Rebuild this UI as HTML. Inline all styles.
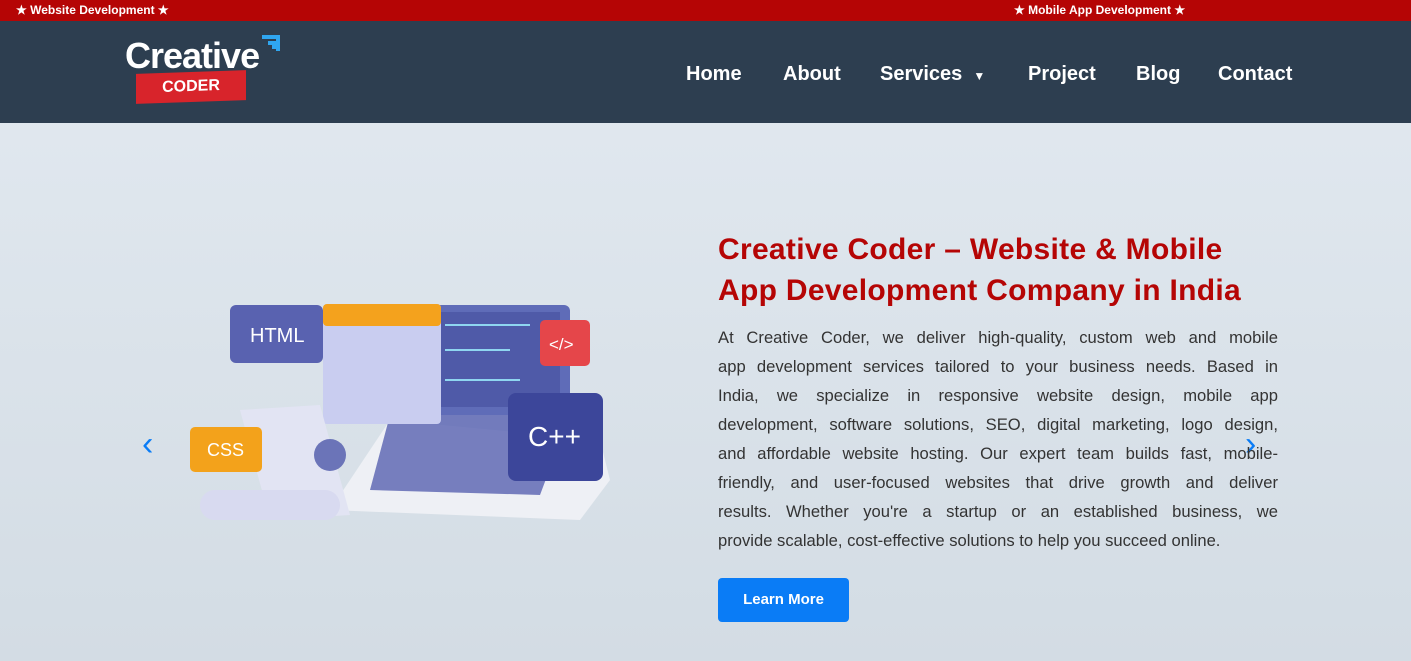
<!DOCTYPE html>
<html><head><meta charset="utf-8"><style>
*{margin:0;padding:0;box-sizing:border-box}
body{width:1411px;height:661px;overflow:hidden;font-family:"Liberation Sans",sans-serif;background:linear-gradient(#e3eaf1,#d3dce4)}
.top{height:21px;background:#b50505;position:relative;color:#fff;font-size:12px;font-weight:bold}
.top span{position:absolute;top:3px}
.nav{height:102px;background:#2d3e50;position:relative}
.menu{position:absolute;top:42px;left:686px;color:#fff;font-size:20px;font-weight:bold}
.menu span{position:absolute;white-space:nowrap}
h1{position:absolute;left:718px;top:229px;width:580px;color:#b50505;font-size:30px;line-height:41px;font-weight:bold;letter-spacing:0.3px}
p{position:absolute;left:718px;top:323px;width:560px;color:#333;font-size:16.6px;line-height:29px}
p span{display:block;text-align:justify;text-align-last:justify;white-space:nowrap}
p span.l{text-align-last:left}
.btn{position:absolute;left:718px;top:578px;width:131px;height:44px;background:#0a7cf6;color:#fff;border-radius:4px;font-weight:bold;font-size:15px;text-align:center;line-height:44px}
.arr{position:absolute;color:#0a7cf6;font-size:34px;top:425px}
</style></head><body>
<div class="top"><span style="left:16px">★ Website Development ★</span><span style="left:1014px">★ Mobile App Development ★</span></div>
<div class="nav">
<div style="position:absolute;left:125px;top:14px;color:#fff;font-size:36px;font-weight:bold;letter-spacing:-1px">Creative</div>
<svg style="position:absolute;left:256px;top:12px" width="28" height="22"><path d="M6 4h16v14M12 10h6v6" stroke="#2fa6f0" stroke-width="4" fill="none"/></svg>
<div style="position:absolute;left:136px;top:51px;width:110px;height:30px;background:#d8242b;transform:skewY(-2deg);color:#fff;font-weight:bold;font-size:16px;text-align:center;line-height:30px">CODER</div>
<div class="menu"><span style="left:0">Home</span><span style="left:97px">About</span><span style="left:194px">Services &nbsp;<small style="font-size:12px">▼</small></span><span style="left:342px">Project</span><span style="left:450px">Blog</span><span style="left:532px">Contact</span></div>
</div>
<svg style="position:absolute;left:180px;top:290px" width="440" height="260">
<path d="M150 220 L400 230 L430 190 L420 150 L210 130 Z" fill="#eef0f5"/>
<rect x="240" y="15" width="150" height="110" rx="6" fill="#5f6cb8"/>
<rect x="250" y="22" width="130" height="95" fill="#4f5aa8"/>
<g stroke="#8fd6f0" stroke-width="2"><line x1="265" y1="35" x2="350" y2="35"/><line x1="265" y1="60" x2="330" y2="60"/><line x1="265" y1="90" x2="340" y2="90"/></g>
<path d="M210 125 L390 125 L360 205 L190 200 Z" fill="#5861b0" opacity=".8"/>
<rect x="50" y="15" width="93" height="58" rx="6" fill="#5962b0"/>
<text x="70" y="52" fill="#fff" font-size="20" font-family="Liberation Sans">HTML</text>
<rect x="143" y="14" width="118" height="120" rx="4" fill="#c9cdf0"/>
<rect x="143" y="14" width="118" height="22" rx="4" fill="#f4a21d"/>
<path d="M60 120 L140 115 L170 225 L90 230 Z" fill="#e2e4f3"/>
<circle cx="150" cy="165" r="16" fill="#6b74b8"/>
<rect x="20" y="200" width="140" height="30" rx="15" fill="#d8daf0"/>
<rect x="10" y="137" width="72" height="45" rx="5" fill="#f3a21b"/>
<text x="27" y="166" fill="#fff" font-size="18" font-family="Liberation Sans">CSS</text>
<rect x="360" y="30" width="50" height="46" rx="5" fill="#e5464a"/>
<text x="369" y="60" fill="#fff" font-size="17" font-family="Liberation Sans">&lt;/&gt;</text>
<rect x="328" y="103" width="95" height="88" rx="8" fill="#3c469a"/>
<text x="348" y="156" fill="#fff" font-size="28" font-family="Liberation Sans">C++</text>
</svg>
<div class="arr" style="left:142px">‹</div>
<div class="arr" style="left:1245px">›</div>
<h1>Creative Coder – Website &amp; Mobile<br>App Development Company in India</h1>
<p><span>At Creative Coder, we deliver high-quality, custom web and mobile</span><span>app development services tailored to your business needs. Based in</span><span>India, we specialize in responsive website design, mobile app</span><span>development, software solutions, SEO, digital marketing, logo design,</span><span>and affordable website hosting. Our expert team builds fast, mobile-</span><span>friendly, and user-focused websites that drive growth and deliver</span><span>results. Whether you're a startup or an established business, we</span><span class="l">provide scalable, cost-effective solutions to help you succeed online.</span></p>
<div class="btn">Learn More</div>
</body></html>
